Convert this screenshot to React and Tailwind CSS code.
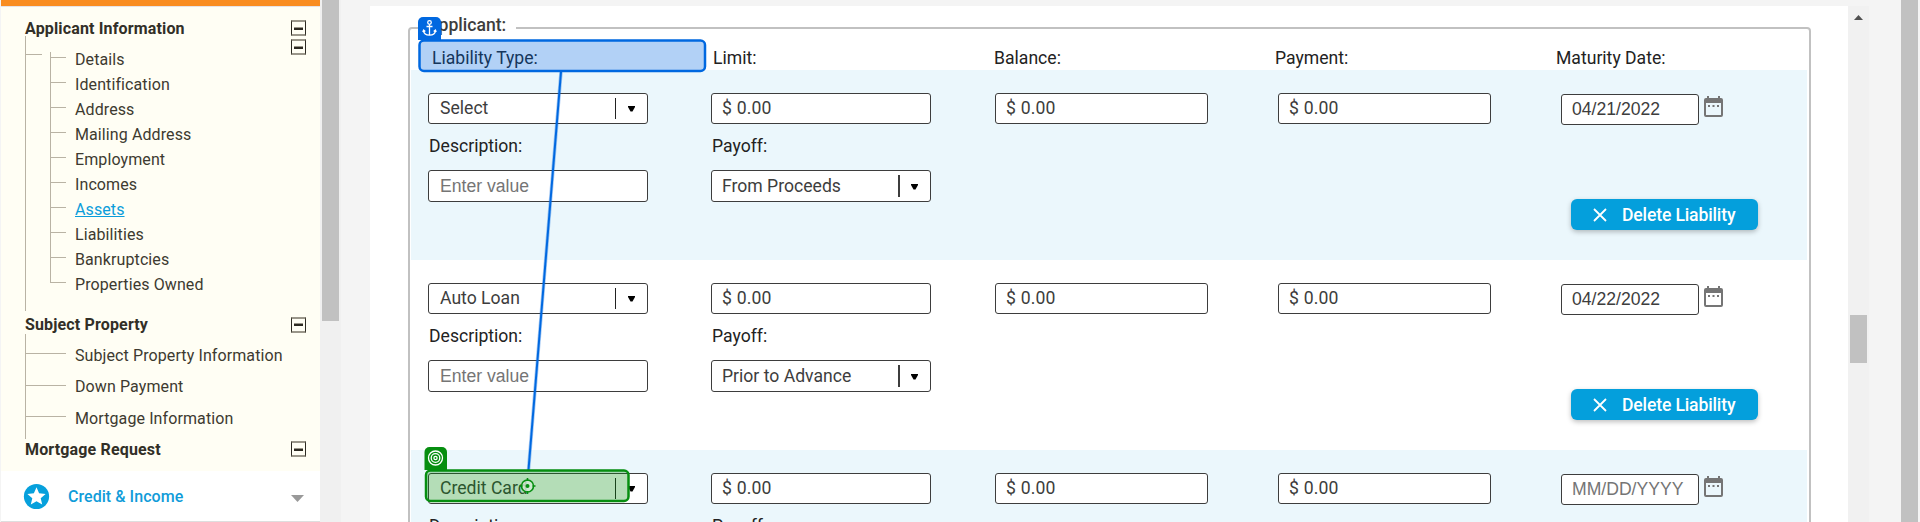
const ROBOTO = 'font-[Roboto,sans-serif]';

const details = ['Details', 'Identification', 'Address', 'Mailing Address', 'Employment', 'Incomes', 'Assets', 'Liabilities', 'Bankruptcies', 'Properties Owned'];
const property = [
  { label: 'Subject Property Information', h: 'h-[31px]' },
  { label: 'Down Payment', h: 'h-[32px]' },
  { label: 'Mortgage Information', h: 'h-[31px]' },
];

const liabilities = [
  { type: 'Select', payoff: 'From Proceeds', date: '04/21/2022', shaded: true },
  { type: 'Auto Loan', payoff: 'Prior to Advance', date: '04/22/2022', shaded: false },
  { type: 'Credit Card', payoff: 'From Proceeds', date: '', shaded: true },
];

function Collapse() {
  return (
    <span className="flex h-4 w-[15px] shrink-0 items-center justify-center border border-y-2 border-[#2d2a22] border-y-[#9a968a]">
      <span className="h-[3px] w-[9px] border-b-2 border-t border-t-[#9a968a] border-b-[#2d2a22]" />
    </span>
  );
}

function Heading({ children, className }) {
  return (
    <div className={'flex items-center justify-between pr-3.5 pl-[24px] text-base font-bold tracking-[0.15px] text-[#322f27] ' + className}>
      {children}
    </div>
  );
}

function Sidebar() {
  return (
    <aside className="ml-px flex h-full w-[319px] shrink-0 flex-col bg-white text-[#3d3a30]">
      <div className="h-1.5 shrink-0 bg-[#f98d20]" />
      <div className="h-px shrink-0 bg-[#e6e3e6]" />
      <div className="flex h-[464px] shrink-0 flex-col bg-[#fffef4] pb-3">
        <Heading className="h-[29px] pt-3">
          <span className="pt-[3px]">Applicant Information</span>
          <span className="mt-px"><Collapse /></span>
        </Heading>
        <div className="ml-6 flex h-[275px] border-l border-[#b9b3a4]">
          <div className="mt-[18px] h-px w-4 shrink-0 bg-[#b9b3a4]" />
          <div className="mt-4 flex w-[240px] shrink-0 flex-col pl-2">
            {details.map((item, i) => (
              <div key={item} className="flex h-[25px] items-start">
                <div className={'w-px shrink-0 self-start bg-[#b9b3a4] ' + (i === 9 ? 'h-1.5' : 'h-[25px]')} />
                <div className="mt-[5px] h-px w-[15px] shrink-0 bg-[#b9b3a4]" />
                <span className={'ml-[9px] text-base leading-4 tracking-[0.1px] whitespace-nowrap ' + (item === 'Assets' ? 'text-[#0b9ddb] underline' : '')}>{item}</span>
              </div>
            ))}
          </div>
          <div className="mt-[3px] ml-[9px]"><Collapse /></div>
        </div>
        <Heading className="h-[23px] pt-1">
          <span>Subject Property</span>
          <Collapse />
        </Heading>
        <div className="ml-6 flex h-[105px] flex-col border-l border-[#b9b3a4] pt-1">
          {property.map((item) => (
            <div key={item.label} className={'flex items-center ' + item.h}>
              <div className="h-px w-10 shrink-0 bg-[#b9b3a4]" />
              <span className="ml-[9px] pt-1 text-base leading-5 tracking-[0.1px] whitespace-nowrap">{item.label}</span>
            </div>
          ))}
        </div>
        <Heading className="h-5">
          <span className="pt-px">Mortgage Request</span>
          <Collapse />
        </Heading>
      </div>
      <div className="flex h-[50px] shrink-0 items-center pr-4 pl-[22px]">
        <svg className="mt-px size-[27px]" viewBox="0 0 27 27">
          <circle cx="13.5" cy="13.5" r="12.6" fill="#06a0dc" />
          <path d="M13.5 4.3l2.6 6 6.5.6-4.9 4.3 1.5 6.4-5.7-3.4-5.7 3.4 1.5-6.4-4.9-4.3 6.5-.6z" fill="#fff" />
        </svg>
        <span className="mt-0.5 ml-[18px] text-base font-medium tracking-[0.05px] text-[#109cd9]">Credit &amp; Income</span>
        <svg className="mt-1 ml-auto h-[7px] w-[13px]" viewBox="0 0 13 7"><path d="M0 0h13L6.500 7z" fill="#999" /></svg>
      </div>
      <div className="h-px shrink-0 bg-[#dedede]" />
    </aside>
  );
}

function Field({ children, className }) {
  return <div className={'flex items-center rounded-[3px] border border-[#3d3d3d] bg-white text-[17.6px] leading-7 text-[#3d3d3d] ' + className}>{children}</div>;
}

function Amount({ className }) {
  return (
    <Field className={'h-[31px] pl-2.5 ' + className}>
      <span className="pb-0.5 tracking-[0.1px] [word-spacing:0.3px]">$ 0.00</span>
    </Field>
  );
}

function Select({ value, thick }) {
  return (
    <Field className={thick ? 'h-8 w-[220px] pl-2.5' : 'h-[31px] w-[220px] pl-[11px]'}>
      <span className={thick ? '' : 'pb-0.5'}>{value}</span>
      <span className={'ml-auto ' + (thick ? 'mr-[11px] h-[22px] w-0.5 bg-[#3d3d3d]' : 'mr-3 h-[21px] w-px bg-[#222]')} />
      <svg className="mt-px mr-3 h-[6px] w-[7px]" viewBox="0 0 7 6"><path d="M0 0h7v1L4.500 5.500h-2L0 1z" fill="#000" /></svg>
    </Field>
  );
}

function CalendarIcon() {
  return (
    <svg className="mt-[3px] ml-[5px] h-[21px] w-[19px]" viewBox="0 0 19 21">
      <path fillRule="evenodd" d="M3 0h2v2h9V0h2v2h1a2 2 0 0 1 2 2v15a2 2 0 0 1-2 2H2a2 2 0 0 1-2-2V4a2 2 0 0 1 2-2h1zM2 7v12h15V7z" fill="#757575" />
      <path d="M4 9h2v2H4zM8.500 9h2v2h-2zM13 9h2v2h-2z" fill="#757575" />
    </svg>
  );
}

function Liability({ item }) {
  return (
    <div className={'ml-px flex h-[190px] w-[1396px] shrink-0 pt-[23px] pl-[17px] ' + (item.shaded ? 'bg-[#ebf7fc]' : 'bg-white')}>
      <div className="w-[283px] shrink-0">
        <Select value={item.type} />
        <div className="flex h-[46px] items-center pb-px pl-px text-[17.6px] text-[#222]">Description:</div>
        <Field className="h-8 w-[220px] pl-[11px]"><span className="font-['Liberation_Sans',sans-serif] text-[17.6px] text-[#757575]">Enter value</span></Field>
      </div>
      <div className="w-[284px] shrink-0">
        <Amount className="w-[220px]" />
        <div className="flex h-[46px] items-center pb-px pl-px text-[17.6px] text-[#222]">Payoff:</div>
        <Select value={item.payoff} thick />
      </div>
      <div className="w-[283px] shrink-0"><Amount className="w-[213px]" /></div>
      <div className="w-[283px] shrink-0"><Amount className="w-[213px]" /></div>
      <div className="flex flex-col">
        <div className="flex items-start">
          <Field className="mt-px h-[31px] w-[138px] pl-2.5">
            <span className={"pb-px font-['Liberation_Sans',sans-serif] text-[17.6px] " + (item.date ? '' : 'text-[#757575]')}>{item.date || 'MM/DD/YYYY'}</span>
          </Field>
          <CalendarIcon />
        </div>
        <button className="mt-[74px] ml-2.5 flex h-[31px] w-[187px] items-center rounded-md bg-[#049fdc] pl-[22px] text-[17.6px] font-medium tracking-[-0.15px] text-white shadow-[0_2px_5px_rgba(0,0,0,0.25)]">
          <svg className="size-[14px]" viewBox="0 0 14 14"><path d="M1 1l12 12M13 1L1 13" stroke="#fff" strokeWidth="1.800" /></svg>
          <span className="ml-[15px] pt-px whitespace-nowrap">Delete Liability</span>
        </button>
      </div>
    </div>
  );
}

function Overlay() {
  return (
    <svg className="absolute top-0 left-0 h-[522px] w-[1920px]" viewBox="0 0 1920 522">
      <path d="M561 72L528.500 470" stroke="#0068e0" strokeOpacity=".35" strokeWidth="3.500" />
      <path d="M561 72L528.500 470" stroke="#0068e0" strokeWidth="2" />
      <path d="M418 40V22a5 5 0 0 1 5-5h13a5 5 0 0 1 5 5v18z" fill="#0068e0" />
      <rect x="419.500" y="40.500" width="285.500" height="30.500" rx="4.500" fill="#0068e0" fillOpacity=".3" stroke="#0068e0" strokeWidth="2.500" />
      <g fill="none" stroke="#fff" strokeWidth="1.300">
        <circle cx="429.500" cy="22.500" r="1.800" />
        <path d="M429.500 24.500V35M426.500 26.500h6M423.500 30.500c.3 3 2.600 4.700 6 4.700s5.700-1.700 6-4.700M422.800 32l.8-2 1.700 1.500M436.200 32l-.8-2-1.700 1.500" />
      </g>
      <path d="M424.500 470V452a5 5 0 0 1 5-5H442a5 5 0 0 1 5 5v18z" fill="#068e10" />
      <rect x="426" y="470.500" width="202.500" height="30.500" rx="4.500" fill="#068e10" fillOpacity=".3" stroke="#068e10" strokeWidth="2.500" />
      <g fill="none" stroke="#fff" strokeWidth="1.300">
        <circle cx="435.500" cy="458" r="7" /><circle cx="435.500" cy="458" r="4.300" /><circle cx="435.500" cy="458" r="1.600" />
      </g>
      <circle cx="527.500" cy="486" r="6.500" fill="#d5ecd6" fillOpacity=".8" />
      <g fill="none" stroke="#068e10" strokeWidth="1.600">
        <circle cx="527.500" cy="486" r="6" />
        <path d="M527.500 478v3M527.500 491v3M519.500 486h3M532.500 486h3" />
        <circle cx="527.500" cy="486" r="2" fill="#068e10" stroke="none" />
      </g>
    </svg>
  );
}

export default function App() {
  return (
    <div className={'relative flex h-[522px] w-[1920px] overflow-hidden bg-[#f4f4f4] ' + ROBOTO}>
      <Sidebar />
      <div className="flex h-full w-[21px] shrink-0 justify-start bg-[#f0f0f0] pl-0.5"><div className="h-[321px] w-[17px] bg-[#c1c1c1]" /></div>
      <main className="mt-1.5 ml-[29px] h-[516px] w-[1478px] shrink-0 overflow-hidden bg-white pt-[21px] pl-[38px]">
        <fieldset className="h-[600px] w-[1403px] min-w-0 rounded-[4px] border-2 border-[#c1c1c1]">
          <div className="-mt-[15px] ml-[9px] flex h-[23px] w-[97px] items-center bg-white pb-px pl-2 text-[17.6px] font-medium text-[#3d3d3d]">Applicant:</div>
          <div className="flex h-[33px] items-center pl-[22px] text-[17.6px] text-[#222]">
            {['Liability Type:', 'Limit:', 'Balance:', 'Payment:', 'Maturity Date:'].map((h) => (
              <span key={h} className="w-[281px] shrink-0 pt-2.5">{h}</span>
            ))}
          </div>
          {liabilities.map((item) => <Liability key={item.type} item={item} />)}
        </fieldset>
      </main>
      <div className="mt-1.5 flex w-[21px] shrink-0 flex-col items-center bg-[#f1f1f1]">
        <svg className="mt-[9px] h-[5px] w-[9px]" viewBox="0 0 9 5"><path d="M4.500 0L9 5H0z" fill="#505050" /></svg>
        <div className="mt-[295px] h-12 w-[17px] bg-[#c1c1c1]" />
      </div>
      <div className="ml-8 w-[17px] shrink-0 bg-[#c1c1c1]" />
      <Overlay />
    </div>
  );
}
